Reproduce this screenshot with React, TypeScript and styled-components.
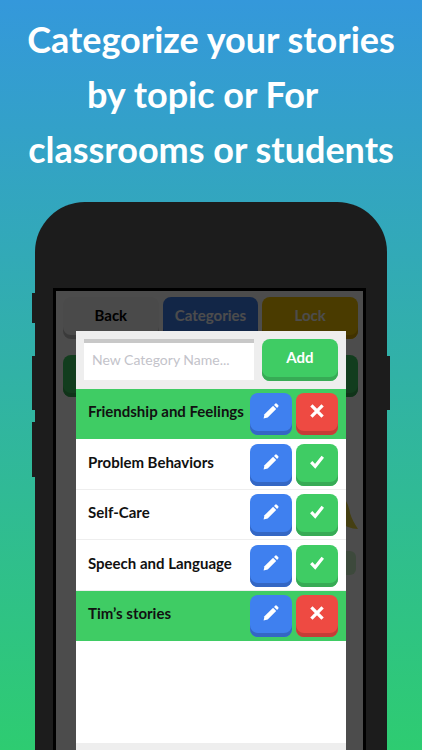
import React, { useState } from "react";
import styled, { createGlobalStyle } from "styled-components";

const GlobalStyle = createGlobalStyle`
  *, *::before, *::after { box-sizing: border-box; }
  body {
    margin: 0;
    font-family: "Lato", "Open Sans", sans-serif;
    font-weight: 700;
  }
  button, input { font: inherit; }
`;

const palette = {
  blue: { face: "#3f80ef", edge: "#3467c4" },
  green: { face: "#3fcc64", edge: "#37ab55" },
  red: { face: "#ee4a42", edge: "#c63d37" },
  yellow: { face: "#f7c600", edge: "#d9a800" },
  white: { face: "#f7f7f7", edge: "#c4c4c4" },
};
type Tone = keyof typeof palette;

const Page = styled.main`
  display: flex;
  flex-direction: column;
  height: 100vh;
  min-height: 600px;
  overflow: hidden;
  background: linear-gradient(#3498db, #2ecc71);
`;

const Headline = styled.h1`
  margin: 12px 0 0;
  flex: none;
  height: 190px;
  color: #fff;
  font-size: 36px;
  font-weight: 700;
  line-height: 55px;
  text-align: center;
  white-space: pre;
`;

const Phone = styled.section`
  position: relative;
  flex: 1;
  display: flex;
  margin: 0 35px;
  padding: 86px 21px 0 18px;
  border-radius: 50px 50px 0 0;
  background: #1c1c1c;
`;

const SideKey = styled.span<{ $side: "left" | "right"; $top: number; $length: number }>`
  position: absolute;
  ${(p) => p.$side}: -3px;
  top: ${(p) => p.$top}px;
  width: 4px;
  height: ${(p) => p.$length}px;
  background: #1c1c1c;
`;

const Screen = styled.div`
  position: relative;
  flex: 1;
  border: 3px solid #000;
  border-bottom: 0;
  background: #fff;
  overflow: hidden;
`;

const AppView = styled.div`
  display: flex;
  flex-direction: column;
  gap: 16px;
  padding: 6px 5px 0 7px;
`;

const Toolbar = styled.nav`
  display: grid;
  grid-template-columns: repeat(3, 1fr);
  gap: 4px;
`;

const KeyButton = styled.button<{ $tone: Tone }>`
  display: flex;
  align-items: center;
  justify-content: center;
  height: 42px;
  min-width: 42px;
  padding: 0 0 6px;
  border: 0;
  border-radius: 8px;
  background: ${(p) => palette[p.$tone].face};
  box-shadow: inset 0 -4px 0 ${(p) => palette[p.$tone].edge};
  color: ${(p) => (p.$tone === "white" ? "#000" : "#fff")};
  font-size: 15px;
  cursor: pointer;
`;

const Story = styled.article`
  display: flex;
  flex-direction: column;
  align-items: flex-end;
  gap: 20px;
  margin-top: 88px;
`;

const StoryTag = styled.span`
  width: 60px;
  height: 24px;
  margin-right: 2px;
  border-radius: 6px;
  background: #cdf5c8;
`;

const Shade = styled.div`
  position: absolute;
  inset: 0;
  background: rgba(0, 0, 0, 0.7);
`;

const Dialog = styled.div`
  position: absolute;
  inset: 40px 17px 0 20px;
  display: flex;
  flex-direction: column;
  background: #fff;
`;

const AddForm = styled.form`
  display: flex;
  gap: 8px;
  padding: 8px;
  height: 58px;
  background: #eee;
`;

const NameInput = styled.input`
  flex: 1;
  min-width: 0;
  height: 41px;
  padding: 0 8px 4px;
  border: 0;
  border-top: 4px solid #c8c8c8;
  border-radius: 0;
  background: #fff;
  font-size: 14px;
  font-weight: 400;
  &::placeholder { color: #c3c3ca; opacity: 1; }
`;

const AddButton = styled(KeyButton)`
  width: 76px;
`;

const List = styled.ul`
  flex: 1;
  margin: 0;
  padding: 0;
  list-style: none;
`;

const Row = styled.li<{ $selected: boolean }>`
  display: flex;
  align-items: center;
  gap: 4px;
  padding: 0 8px 0 12px;
  height: 50px;
  background: ${(p) => (p.$selected ? "#3fcc64" : "#fff")};
  box-shadow: inset 0 -1px 0 ${(p) => (p.$selected ? "#3fcc64" : "#eee")};
  &:nth-child(even) { height: 51px; }
`;

const Name = styled.span`
  flex: 1;
  padding-bottom: 6px;
  color: #111;
  font-size: 15px;
  white-space: nowrap;
`;

const Footer = styled.footer`
  height: 7px;
  background: #eee;
`;

const Pencil = () => (
  <svg width="16" height="16" viewBox="0 0 16 16" fill="#fff" aria-hidden="true">
    <path d="M0.6 15.4 1.5 11.3 10.1 2.8 13.2 5.9 4.7 14.5Z" />
    <path d="M11 1.9 12.4 0.6Q13.1 0 13.8 0.7L15.3 2.2Q16 2.9 15.3 3.6L14.1 5Z" />
  </svg>
);
const Cross = () => (
  <svg width="14" height="14" viewBox="0 0 14 14" stroke="#fff" strokeWidth="3.3" aria-hidden="true">
    <path d="M1.4 1.4 12.6 12.6M12.6 1.4 1.4 12.6" />
  </svg>
);
const Check = () => (
  <svg width="14" height="14" viewBox="0 0 14 14" fill="none" stroke="#fff" strokeWidth="3.2" aria-hidden="true">
    <path d="M1.2 7.2 5.2 11.3 12.8 1.8" />
  </svg>
);
const Banana = () => (
  <svg width="60" height="30" viewBox="0 0 60 30" fill="#e6d23c" aria-hidden="true">
    <path d="M48 0Q51 5 52 12 54 19 60 28 50 28 40 20 47 10 48 0Z" />
  </svg>
);

const initial = [
  { name: "Friendship and Feelings", selected: true },
  { name: "Problem Behaviors", selected: false },
  { name: "Self-Care", selected: false },
  { name: "Speech and Language", selected: false },
  { name: "Tim’s stories", selected: true },
];

export default function App() {
  const [categories, setCategories] = useState(initial);
  const [draft, setDraft] = useState("");

  const add = (event: React.FormEvent) => {
    event.preventDefault();
    if (!draft.trim()) return;
    setCategories([...categories, { name: draft.trim(), selected: false }]);
    setDraft("");
  };
  const toggle = (index: number) =>
    setCategories(categories.map((c, i) => (i === index ? { ...c, selected: !c.selected } : c)));

  return (
    <>
      <GlobalStyle />
      <Page>
        <Headline>{"Categorize your stories\nby topic or For  \nclassrooms or students"}</Headline>
        <Phone>
          <SideKey $side="left" $top={91} $length={30} />
          <SideKey $side="left" $top={154} $length={54} />
          <SideKey $side="left" $top={220} $length={55} />
          <SideKey $side="right" $top={154} $length={54} />
          <Screen>
            <AppView>
              <Toolbar>
                <KeyButton $tone="white">Back</KeyButton>
                <KeyButton $tone="blue">Categories</KeyButton>
                <KeyButton $tone="yellow">Lock</KeyButton>
              </Toolbar>
              <KeyButton $tone="green" aria-label="New story" />
              <Story>
                <Banana />
                <StoryTag />
              </Story>
            </AppView>
            <Shade />
            <Dialog role="dialog" aria-label="Categories">
              <AddForm onSubmit={add}>
                <NameInput
                  aria-label="New Category Name"
                  placeholder="New Category Name..."
                  value={draft}
                  onChange={(e) => setDraft(e.target.value)}
                />
                <AddButton $tone="green" type="submit">Add</AddButton>
              </AddForm>
              <List>
                {categories.map((c, i) => (
                  <Row key={c.name} $selected={c.selected}>
                    <Name>{c.name}</Name>
                    <KeyButton $tone="blue" aria-label={`Edit ${c.name}`}><Pencil /></KeyButton>
                    <KeyButton
                      $tone={c.selected ? "red" : "green"}
                      aria-label={`${c.selected ? "Remove" : "Choose"} ${c.name}`}
                      onClick={() => toggle(i)}
                    >
                      {c.selected ? <Cross /> : <Check />}
                    </KeyButton>
                  </Row>
                ))}
              </List>
              <Footer />
            </Dialog>
          </Screen>
        </Phone>
      </Page>
    </>
  );
}
